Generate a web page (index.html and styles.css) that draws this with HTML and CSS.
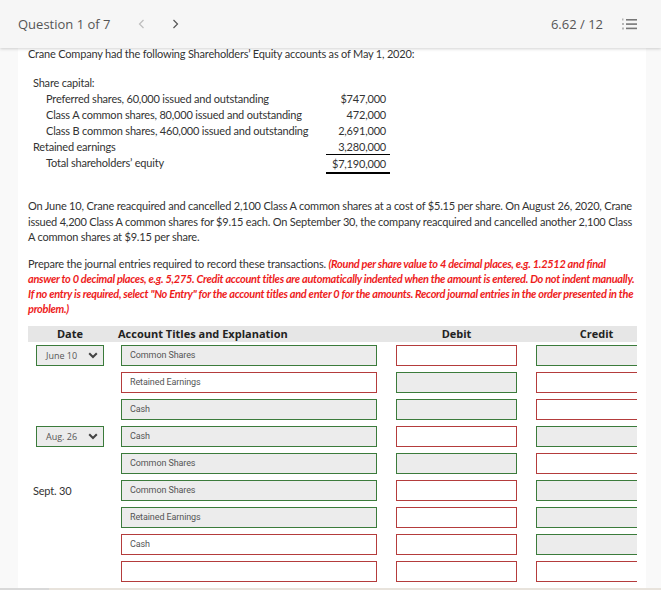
FILE: index.html
```html
<!DOCTYPE html>
<html lang="en">
<head>
<meta charset="utf-8">
<title>Question 1 of 7</title>
<link rel="stylesheet" href="styles.css">
</head>
<body>
<div class="app">
  <header class="topbar">
    <div class="nav">
      <span class="qtitle">Question 1 of 7</span>
      <svg class="chev" width="7" height="10" viewBox="0 0 7 10"><path d="M5.5 1 L1.5 5 L5.5 9" fill="none" stroke="#bdbdbd" stroke-width="1.2"/></svg>
      <svg class="chev next" width="7" height="10" viewBox="0 0 7 10"><path d="M1.5 1 L5.5 5 L1.5 9" fill="none" stroke="#555" stroke-width="1.2"/></svg>
    </div>
    <div class="score">
      <span>6.62 / 12</span>
      <svg class="listicon" width="15" height="12" viewBox="0 0 15 12">
        <rect x="0" y="0.5" width="1.5" height="2" fill="#b5b5b5"/>
        <rect x="0" y="5" width="2" height="2" fill="#b5b5b5"/>
        <rect x="0" y="9.5" width="2" height="2" fill="#b5b5b5"/>
        <rect x="4" y="1" width="11" height="1.6" fill="#777"/>
        <rect x="4" y="5.3" width="11" height="1.6" fill="#777"/>
        <rect x="4" y="9.6" width="11" height="1.6" fill="#777"/>
      </svg>
    </div>
  </header>

  <main class="main">
    <div class="gutter"></div>
    <section class="content">
      <p class="intro">Crane Company had the following Shareholders’ Equity accounts as of May 1, 2020:</p>

      <div class="equity">
        <div class="lbl">Share capital:</div><div class="amt"></div>
        <div class="lbl ind">Preferred shares, 60,000 issued and outstanding</div><div class="amt">$747,000</div>
        <div class="lbl ind">Class A common shares, 80,000 issued and outstanding</div><div class="amt">472,000</div>
        <div class="lbl ind">Class B common shares, 460,000 issued and outstanding</div><div class="amt">2,691,000</div>
        <div class="lbl">Retained earnings</div><div class="amt under">3,280,000</div>
        <div class="lbl ind">Total shareholders’ equity</div><div class="amt total">$7,190,000</div>
      </div>

      <p class="para">On June 10, Crane reacquired and cancelled 2,100 Class A common shares at a cost of $5.15 per share. On August 26, 2020, Crane issued 4,200 Class A common shares for $9.15 each. On September 30, the company reacquired and cancelled another 2,100 Class A common shares at $9.15 per share.</p>

      <p class="para2">Prepare the journal entries required to record these transactions. <em class="note">(Round per share value to 4 decimal places, e.g. 1.2512 and final answer to 0 decimal places, e.g. 5,275. Credit account titles are automatically indented when the amount is entered. Do not indent manually. If no entry is required, select "No Entry" for the account titles and enter 0 for the amounts. Record journal entries in the order presented in the problem.)</em></p>

      <div class="journal">
        <div class="jhead">
          <div class="c-date"><div class="hdate">Date</div></div>
          <div class="c-acct"><div class="hacct">Account Titles and Explanation</div></div>
          <div class="c-amt"><div class="hamt">Debit</div></div>
          <div class="c-amt"><div class="hamt">Credit</div></div>
        </div>
        <div class="jrows">
          <div class="jrow">
            <div class="c-date"><div class="sel ok"><span>June 10</span><svg width="10" height="7" viewBox="0 0 10 7"><path d="M1.2 1.2 L5 5 L8.8 1.2" fill="none" stroke="#444" stroke-width="2"/></svg></div></div>
            <div class="c-acct"><div class="fld acct ok">Common Shares</div></div>
            <div class="c-amt"><div class="fld amtf bad"></div></div>
            <div class="c-amt"><div class="fld amtf ok"></div></div>
          </div>
          <div class="jrow">
            <div class="c-date"></div>
            <div class="c-acct"><div class="fld acct bad">Retained Earnings</div></div>
            <div class="c-amt"><div class="fld amtf ok"></div></div>
            <div class="c-amt"><div class="fld amtf bad"></div></div>
          </div>
          <div class="jrow">
            <div class="c-date"></div>
            <div class="c-acct"><div class="fld acct ok">Cash</div></div>
            <div class="c-amt"><div class="fld amtf ok"></div></div>
            <div class="c-amt"><div class="fld amtf bad"></div></div>
          </div>
          <div class="jrow">
            <div class="c-date"><div class="sel ok"><span>Aug. 26</span><svg width="10" height="7" viewBox="0 0 10 7"><path d="M1.2 1.2 L5 5 L8.8 1.2" fill="none" stroke="#444" stroke-width="2"/></svg></div></div>
            <div class="c-acct"><div class="fld acct ok">Cash</div></div>
            <div class="c-amt"><div class="fld amtf bad"></div></div>
            <div class="c-amt"><div class="fld amtf ok"></div></div>
          </div>
          <div class="jrow">
            <div class="c-date"></div>
            <div class="c-acct"><div class="fld acct ok">Common Shares</div></div>
            <div class="c-amt"><div class="fld amtf ok"></div></div>
            <div class="c-amt"><div class="fld amtf bad"></div></div>
          </div>
          <div class="jrow">
            <div class="c-date"><div class="plaindate">Sept. 30</div></div>
            <div class="c-acct"><div class="fld acct ok">Common Shares</div></div>
            <div class="c-amt"><div class="fld amtf bad"></div></div>
            <div class="c-amt"><div class="fld amtf ok"></div></div>
          </div>
          <div class="jrow">
            <div class="c-date"></div>
            <div class="c-acct"><div class="fld acct ok">Retained Earnings</div></div>
            <div class="c-amt"><div class="fld amtf bad"></div></div>
            <div class="c-amt"><div class="fld amtf ok"></div></div>
          </div>
          <div class="jrow">
            <div class="c-date"></div>
            <div class="c-acct"><div class="fld acct bad">Cash</div></div>
            <div class="c-amt"><div class="fld amtf bad"></div></div>
            <div class="c-amt"><div class="fld amtf ok"></div></div>
          </div>
          <div class="jrow">
            <div class="c-date"></div>
            <div class="c-acct"><div class="fld acct bad"></div></div>
            <div class="c-amt"><div class="fld amtf bad"></div></div>
            <div class="c-amt"><div class="fld amtf bad"></div></div>
          </div>
        </div>
      </div>
    </section>
    <div class="gutter"></div>
  </main>

  <div class="hscroll"><div class="thumb"></div><div class="track"></div></div>
</div>
</body>
</html>
```

FILE: styles.css
```css
html, body {
  margin: 0;
  padding: 0;
}
body {
  background: #f9f9f9;
  font-family: Lato, "Open Sans", sans-serif;
  font-size: 11px;
  color: #333;
  overflow: hidden;
}
.app {
  height: 590px;
  display: flex;
  flex-direction: column;
}
.topbar {
  position: relative;
  z-index: 1;
  height: 47px;
  flex: 0 0 47px;
  background: #f6f6f6;
  box-shadow: 0 1px 3px rgba(0, 0, 0, 0.18);
  display: flex;
  align-items: center;
  justify-content: space-between;
  padding: 0 24px 1px 18px;
  font-family: "Open Sans", sans-serif;
  font-size: 13px;
  color: #555;
}
.nav {
  display: flex;
  align-items: center;
}
.chev {
  margin-left: 28px;
}
.chev.next {
  margin-left: 27px;
}
.score {
  display: flex;
  align-items: center;
}
.listicon {
  margin-left: 19px;
}
.main {
  flex: 1;
  display: flex;
  overflow: hidden;
  min-height: 0;
}
.gutter {
  flex: 0 0 18px;
}
.gutter:last-child {
  flex: 1;
}
.content {
  width: 609px;
  flex: 0 0 609px;
  background: #fff;
  padding: 0 9px 0 10px;
  overflow: hidden;
  letter-spacing: -0.2px;
}
.intro {
  margin: 0;
  line-height: 11px;
}
.equity {
  margin: 16px 0 0 5px;
  display: grid;
  grid-template-columns: 293px 64px;
  line-height: 16px;
}
.lbl.ind {
  padding-left: 13px;
}
.amt {
  text-align: right;
  padding-right: 4px;
}
.amt.under {
  border-bottom: 1px solid #000;
  line-height: 15px;
}
.amt.total {
  border-bottom: 2px solid #000;
  line-height: 17px;
}
.para {
  margin: 24px 0 0;
  line-height: 15.5px;
}
.para2 {
  margin: 11px 0 0;
  line-height: 15px;
}
.note {
  color: #ee1c1c;
  font-weight: bold;
  font-style: italic;
  letter-spacing: -0.3px;
}
.journal {
  margin-top: 10px;
  width: 609px;
  overflow: hidden;
  letter-spacing: 0;
}
.jhead, .jrow {
  display: grid;
  grid-template-columns: 84px 265px 140px 140px;
  width: 629px;
}
.jhead {
  background: #e6e6e6;
  height: 16px;
  line-height: 16px;
  font-family: "Open Sans", sans-serif;
  font-weight: 700;
  font-size: 11px;
  color: #222;
}
.hdate {
  width: 68px;
  margin-left: 8px;
  text-align: center;
}
.hacct {
  padding-left: 6px;
}
.hamt {
  width: 121px;
  margin-left: 19px;
  text-align: center;
}
.jrows {
  display: flex;
  flex-direction: column;
  gap: 6px;
  padding-top: 3px;
}
.fld, .sel {
  box-sizing: border-box;
  height: 21px;
  border: 1px solid;
  font-family: "Open Sans", sans-serif;
  font-size: 9px;
  color: #555;
  line-height: 19px;
}
.ok {
  border-color: #3b7b3b;
  background: #ececec;
}
.bad {
  border-color: #b43c3c;
  background: #fff;
}
.sel {
  width: 68px;
  margin-left: 8px;
  display: flex;
  align-items: center;
  justify-content: space-between;
  padding: 0 5px 0 9px;
}
.sel svg {
  flex: none;
}
.acct {
  width: 256px;
  margin-left: 9px;
  padding-left: 8px;
  font-family: Roboto, "Open Sans", sans-serif;
  letter-spacing: -0.1px;
}
.amtf {
  width: 121px;
  margin-left: 19px;
}
.plaindate {
  padding-left: 5px;
  line-height: 21px;
  color: #333;
  letter-spacing: -0.2px;
}
.hscroll {
  flex: 0 0 2px;
  display: flex;
}
.thumb {
  width: 49px;
  background: #d9d9d9;
}
.track {
  flex: 1;
  background: #e8e3dc;
}
```
